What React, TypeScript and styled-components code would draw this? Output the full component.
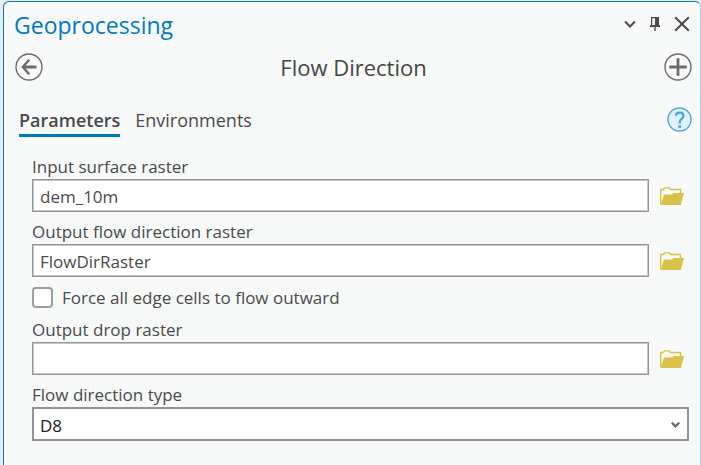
import React from "react";
import styled, { createGlobalStyle } from "styled-components";

const GlobalStyle = createGlobalStyle`
  *, *::before, *::after { box-sizing: border-box; }
  body {
    margin: 0;
    background: #e9ebec;
    color: #4a4a4a;
    font-family: "Open Sans", "Noto Sans", sans-serif;
    font-size: 17px;
  }
  button, input, select { font: inherit; color: inherit; }
`;

const Panel = styled.main`
  min-height: calc(100vh - 2px);
  margin: 1px 0 0 3px;
  padding: 0 8px 24px 10px;
  background: #f7f9f8;
  border: 1px solid #0079c1;
  border-right-color: #a9d6ec;
  border-bottom: 0;
  border-radius: 6px 6px 0 0;
`;

const TitleBar = styled.header`
  display: flex;
  align-items: center;
  justify-content: space-between;
  height: 45px;
`;

const PanelTitle = styled.h1`
  margin: 0;
  color: #0079c1;
  font-size: 23px;
  font-weight: 400;
  line-height: 32px;
`;

const WindowControls = styled.div`
  display: flex;
  align-items: center;
  gap: 12px;
  padding: 0 2px 2px 0;
`;

const IconButton = styled.button`
  display: grid;
  place-items: center;
  flex: none;
  padding: 0;
  border: 0;
  background: none;
  cursor: pointer;
  svg { display: block; }
`;

const ToolBar = styled.div`
  display: grid;
  grid-template-columns: 28px 1fr 28px;
  align-items: center;
  height: 40px;
  padding-left: 1px;
`;

const ToolTitle = styled.h2`
  margin: 0;
  color: #454545;
  font-size: 22px;
  font-weight: 400;
  line-height: 32px;
  text-align: center;
`;

const TabBar = styled.div`
  display: flex;
  align-items: center;
  justify-content: space-between;
  height: 64px;
  padding-left: 5px;
`;

const Tabs = styled.nav`
  display: flex;
  gap: 15px;
  padding-top: 7px;
`;

const Tab = styled.button<{ $active?: boolean }>`
  padding: 0 0 1px;
  border: 0;
  border-bottom: 3px solid ${(p) => (p.$active ? "#0079c1" : "transparent")};
  background: none;
  font-size: 18px;
  font-weight: ${(p) => (p.$active ? 600 : 400)};
  line-height: 25px;
  cursor: pointer;
`;

const Form = styled.form`
  display: flex;
  flex-direction: column;
  gap: 8px;
  padding: 4px 3px 0 18px;
`;

const Field = styled.div`
  display: grid;
  grid-template-columns: 1fr 40px;
`;

const Label = styled.label`
  grid-column: 1 / -1;
  line-height: 24px;
`;

const TextInput = styled.input`
  width: 100%;
  height: 33px;
  padding: 2px 7px 0;
  border: 1px solid #959595;
  border-radius: 0;
  background: #fff;
  box-shadow: inset 0 0 0 1px #c4c6c6;
`;

const BrowseButton = styled(IconButton)`
  width: 24px;
  height: 33px;
  margin-left: 11px;
`;

const CheckRow = styled.label`
  display: flex;
  align-items: center;
  gap: 9px;
  height: 25px;
`;

const CheckBox = styled.input`
  appearance: none;
  width: 21px;
  height: 21px;
  margin: 0;
  border: 2px solid #9c9c9c;
  border-radius: 4px;
  background: #fff;
  &:checked { background: #0079c1; }
`;

const SelectBox = styled.div`
  grid-column: 1 / -1;
  display: grid;
  align-items: center;
  > * { grid-area: 1 / 1; }
  svg {
    justify-self: end;
    margin-right: 9px;
    color: #6b6b6b;
    pointer-events: none;
  }
`;

const Select = styled.select`
  appearance: none;
  width: 100%;
  height: 34px;
  padding: 2px 30px 0 6px;
  border: 2px solid #939393;
  border-radius: 0;
  background: #fff;
  color: #1c1c1c;
`;

const Chevron = ({ size = 12, width = 2 }: { size?: number; width?: number }) => (
  <svg width={size} height={size} viewBox="0 0 12 12" fill="none" stroke="currentColor" strokeWidth={width}>
    <path d="M1 3.500 6 8.500 11 3.500" />
  </svg>
);

const PinIcon = () => (
  <svg width="14" height="18" viewBox="0 0 14 18" fill="#4a4a4a">
    <path d="M3 2h8v8h1v2H7.700v4H6.300v-4H2v-2h1zM4.200 3.200V10H7V3.200z" fillRule="evenodd" />
  </svg>
);

const CloseIcon = () => (
  <svg width="16" height="16" viewBox="0 0 16 16" fill="none" stroke="#4a4a4a" strokeWidth="2">
    <path d="m1.200 1.200 13.600 13.600M14.800 1.200 1.200 14.800" />
  </svg>
);

const BackIcon = () => (
  <svg width="28" height="28" viewBox="0 0 28 28" fill="none" stroke="#6b6b6b">
    <circle cx="14" cy="14" r="13" strokeWidth="1.400" />
    <path d="M21.500 14H8.500" strokeWidth="3" />
    <path d="M14.200 6.800 7.800 14l6.400 7.200" strokeWidth="2.400" />
  </svg>
);

const AddIcon = () => (
  <svg width="28" height="28" viewBox="0 0 28 28" fill="none" stroke="#6b6b6b">
    <circle cx="14" cy="14" r="13" strokeWidth="1.400" />
    <path d="M14 5.300v17.400M5.300 14h17.400" strokeWidth="2.800" />
  </svg>
);

const HelpIcon = () => (
  <svg width="25" height="25" viewBox="0 0 25 25" fill="none" stroke="#4ea6dc">
    <circle cx="12.500" cy="12.500" r="11.500" fill="#e1f0fb" strokeWidth="1.400" />
    <path d="M8.900 8.800C9 6.600 10.500 5.600 12.600 5.600c2.300 0 3.800 1.200 3.800 3.100 0 3-3.700 3.200-3.700 6.600v1.200" strokeWidth="2.400" />
    <path d="M12.700 18.300v2.700" strokeWidth="2.800" />
  </svg>
);

const FolderIcon = () => (
  <svg width="24" height="18" viewBox="0 0 24 18">
    <path d="M.7 17V2.500h2.600L4.500.9h4.700l1.300 1.600h10V8" fill="#fbfaf0" stroke="#d8c24a" strokeWidth="1.400" />
    <path d="M.500 18 4 7.500h8l1.500-1.500H24L20.800 18z" fill="#d8c24a" />
  </svg>
);

type RasterFieldProps = { id: string; label: string; value?: string };

const RasterField = ({ id, label, value = "" }: RasterFieldProps) => (
  <Field>
    <Label htmlFor={id}>{label}</Label>
    <TextInput id={id} type="text" defaultValue={value} />
    <BrowseButton type="button" aria-label={`Browse: ${label}`}>
      <FolderIcon />
    </BrowseButton>
  </Field>
);

export default function App() {
  return (
    <>
      <GlobalStyle />
      <Panel>
        <TitleBar>
          <PanelTitle>Geoprocessing</PanelTitle>
          <WindowControls>
            <IconButton type="button" aria-label="Menu"><Chevron /></IconButton>
            <IconButton type="button" aria-label="Auto hide"><PinIcon /></IconButton>
            <IconButton type="button" aria-label="Close"><CloseIcon /></IconButton>
          </WindowControls>
        </TitleBar>
        <ToolBar>
          <IconButton type="button" aria-label="Back"><BackIcon /></IconButton>
          <ToolTitle>Flow Direction</ToolTitle>
          <IconButton type="button" aria-label="Add"><AddIcon /></IconButton>
        </ToolBar>
        <TabBar>
          <Tabs>
            <Tab type="button" $active>Parameters</Tab>
            <Tab type="button">Environments</Tab>
          </Tabs>
          <IconButton type="button" aria-label="Help"><HelpIcon /></IconButton>
        </TabBar>
        <Form>
          <RasterField id="surface" label="Input surface raster" value="dem_10m" />
          <RasterField id="direction" label="Output flow direction raster" value="FlowDirRaster" />
          <CheckRow>
            <CheckBox type="checkbox" />
            Force all edge cells to flow outward
          </CheckRow>
          <RasterField id="drop" label="Output drop raster" />
          <Field>
            <Label htmlFor="type">Flow direction type</Label>
            <SelectBox>
              <Select id="type" defaultValue="D8">
                <option>D8</option>
                <option>MFD</option>
                <option>DINF</option>
              </Select>
              <Chevron size={9} width={3} />
            </SelectBox>
          </Field>
        </Form>
      </Panel>
    </>
  );
}
